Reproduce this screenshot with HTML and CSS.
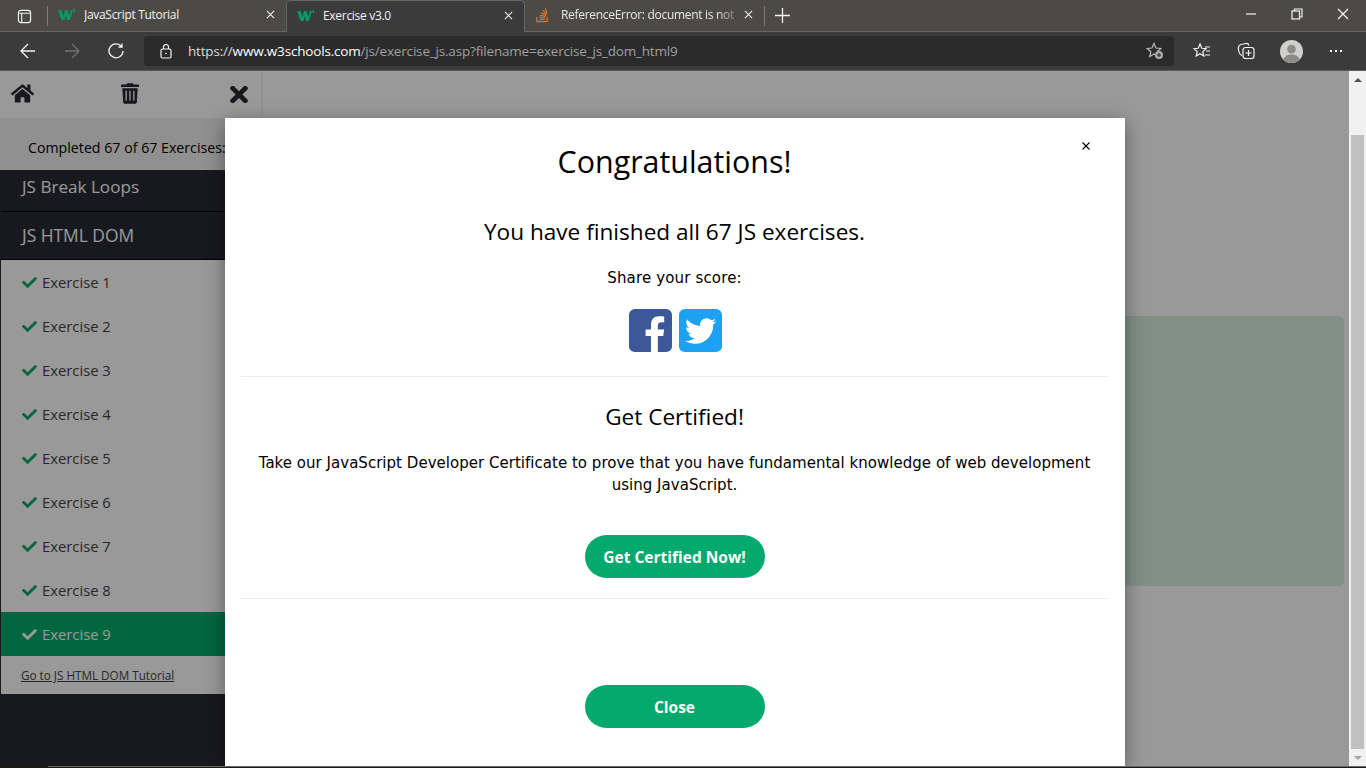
FILE: index.html
```html
<!DOCTYPE html>
<html lang="en">
<head>
<meta charset="utf-8">
<title>Exercise v3.0</title>
<link rel="stylesheet" href="styles.css">
</head>
<body>
<header class="tabbar">
  <svg class="ic tabs-ic" viewBox="0 0 16 16"><rect x="1.500" y="1.500" width="13" height="13" rx="2.500"/><path d="M1.500 4.500h13M5 4.500v10"/></svg>
  <span class="vsep"></span>
  <div class="tab tab-first">
    <svg class="fav" viewBox="0 0 17 12"><path d="M0 1h3.500l2 6 1.500-6h2.500l1.700 6 1.600-6H15l-3.200 10H9L8 6 6.500 11h-3zM15.500 0H17v3h-1.500z"/></svg>
    <span class="tab-title">JavaScript Tutorial</span>
    <svg class="tab-x" viewBox="0 0 10 10"><path d="M1 1l8 8M9 1l-8 8"/></svg>
  </div>
  <div class="tab active">
    <svg class="fav" viewBox="0 0 17 12"><path d="M0 1h3.500l2 6 1.500-6h2.500l1.700 6 1.600-6H15l-3.200 10H9L8 6 6.500 11h-3zM15.500 0H17v3h-1.500z"/></svg>
    <span class="tab-title">Exercise v3.0</span>
    <svg class="tab-x" viewBox="0 0 10 10"><path d="M1 1l8 8M9 1l-8 8"/></svg>
  </div>
  <div class="tab">
    <svg class="fav so" viewBox="0 0 16 16"><path class="so-bin" d="M2 10v5h11v-5"/><path class="so-lines" d="M4.500 12.800h6M4.700 10.600l6 .6M5.300 8.200l5.800 1.600M6.600 5.600l5.200 3M8.600 3l3.600 4.600M11.200 1l1.400 5.600"/></svg>
    <span class="tab-title fade">ReferenceError: document is not</span>
    <svg class="tab-x" viewBox="0 0 10 10"><path d="M1 1l8 8M9 1l-8 8"/></svg>
  </div>
  <span class="vsep"></span>
  <svg class="ic plus" viewBox="0 0 14 14"><path d="M7 0v14M0 7h14"/></svg>
  <div class="winctl">
    <svg class="ic" viewBox="0 0 12 12"><path d="M1 6h10"/></svg>
    <svg class="ic" viewBox="0 0 12 12"><rect x="1" y="3" width="7.500" height="8"/><path d="M3.500 3V1h7.500v8H8.500"/></svg>
    <svg class="ic" viewBox="0 0 12 12"><path d="M1 1l10 10M11 1L1 11"/></svg>
  </div>
</header>
<nav class="toolbar">
  <svg class="ic nav-ic" viewBox="0 0 16 16"><path d="M15 8H1M8 1L1 8l7 7"/></svg>
  <svg class="ic nav-ic dim" viewBox="0 0 16 16"><path d="M1 8h14M8 1l7 7-7 7"/></svg>
  <svg class="ic nav-ic" viewBox="0 0 16 16"><path d="M13.500 3.500A7 7 0 1 0 15 8M14 .5v3.500h-3.500"/></svg>
  <div class="omnibox">
    <svg class="ic lock" viewBox="0 0 12 15"><rect x="1" y="5" width="10" height="9" rx="1.500"/><path d="M3.500 5V3a2.500 2.500 0 0 1 5 0v2"/><circle class="dot" cx="6" cy="9.500" r=".8"/></svg>
    <span class="url"><span class="u-mid">https://</span><span class="u-host">www.w3schools.com</span><span class="u-dim">/js/exercise_js.asp?filename=exercise_js_dom_html9</span></span>
    <svg class="ic star-add" viewBox="0 0 18 18"><path d="M8 1.500l2 4.500 4.800.5-3.600 3.200 1 4.800L8 12l-4.200 2.500 1-4.800L1.200 6.500 6 6z"/><circle class="badge" cx="13" cy="13" r="4"/><path class="badge-plus" d="M13 11v4M11 13h4"/></svg>
  </div>
  <div class="tools">
    <svg class="ic tool" viewBox="0 0 18 18"><path d="M7 2l1.800 4.300 4.200.4-3.200 2.900 1 4.400L7 11.700 3.200 14l1-4.400L1 6.700l4.200-.4zM12 5h5M13 9h4M12 13h5"/></svg>
    <svg class="ic tool" viewBox="0 0 18 18"><path d="M5 13.500C3 13 2 11 1.500 8 1 5 2 3 4 2.500l5-1c1.500-.2 2.500.5 3 2"/><rect x="6" y="5.500" width="11" height="11" rx="2.500"/><path d="M11.500 8v6M8.500 11h6"/></svg>
    <svg class="avatar" viewBox="0 0 24 24"><circle class="av-bg" cx="12" cy="12" r="12"/><circle class="av-fg" cx="12" cy="9.500" r="4.500"/><path class="av-fg" d="M3.500 20.500C5 16 8 15 12 15s7 1 8.500 5.500A12 12 0 0 1 3.500 20.500z"/></svg>
    <span class="more"><i></i><i></i><i></i></span>
  </div>
</nav>
<div class="page">
  <aside class="sidebar">
    <div class="side-top">
      <svg class="s-ic home" viewBox="0 0 576 512"><path d="M280 148L96 300v164c0 9 7 16 16 16l112-.3c9 0 16-7 16-16V368c0-9 7-16 16-16h64c9 0 16 7 16 16v95.600c0 9 7 16 16 16l112 .4c9 0 16-7 16-16V300L296 148c-4.500-3.600-11.500-3.600-16 0zM572 251l-84-69V44c0-7-5-12-12-12h-56c-7 0-12 5-12 12v72l-89-74c-18-14-43-14-61 0L4 251c-5 4-6 12-2 17l26 31c4 5 12 6 17 2L280 107c4.500-3.600 11.500-3.600 16 0l235 194c5 4 13 3 17-2l26-31c4-5 3-13-2-17z"/></svg>
      <svg class="s-ic trash" viewBox="0 0 448 512"><path d="M432 32H312l-9-19C299 5 291 0 282 0H166c-9 0-17 5-21 13l-9 19H16C7 32 0 39 0 48v32c0 9 7 16 16 16h416c9 0 16-7 16-16V48c0-9-7-16-16-16zM53 467c2 25 23 45 48 45h246c25 0 46-20 48-45L416 128H32zM144 200v220c0 9-7 16-16 16s-16-7-16-16V200c0-9 7-16 16-16s16 7 16 16zm96 0v220c0 9-7 16-16 16s-16-7-16-16V200c0-9 7-16 16-16s16 7 16 16zm96 0v220c0 9-7 16-16 16s-16-7-16-16V200c0-9 7-16 16-16s16 7 16 16z"/></svg>
      <svg class="s-ic cross" viewBox="0 90 352 332"><path d="M242 256l100-100c12-12 12-32 0-44l-22-22c-12-12-32-12-44 0L176 190 76 90c-12-12-32-12-44 0L10 112c-12 12-12 32 0 44l100 100L10 356c-12 12-12 32 0 44l22 22c12 12 32 12 44 0l100-100 100 100c12 12 32 12 44 0l22-22c12-12 12-32 0-44z"/></svg>
    </div>
    <div class="progress">Completed 67 of 67 Exercises:</div>
    <div class="topic first">JS Break Loops</div>
    <div class="topic">JS HTML DOM</div>
    <ul class="ex-list">
      <li class="ex"><svg class="check" viewBox="0 0 512 512"><path d="M174 439L7 273c-10-10-10-26 0-36l36-36c10-10 26-10 36 0l113 112L433 73c10-10 26-10 36 0l36 36c10 10 10 26 0 36L210 439c-10 10-26 10-36 0z"/></svg>Exercise 1</li>
      <li class="ex"><svg class="check" viewBox="0 0 512 512"><path d="M174 439L7 273c-10-10-10-26 0-36l36-36c10-10 26-10 36 0l113 112L433 73c10-10 26-10 36 0l36 36c10 10 10 26 0 36L210 439c-10 10-26 10-36 0z"/></svg>Exercise 2</li>
      <li class="ex"><svg class="check" viewBox="0 0 512 512"><path d="M174 439L7 273c-10-10-10-26 0-36l36-36c10-10 26-10 36 0l113 112L433 73c10-10 26-10 36 0l36 36c10 10 10 26 0 36L210 439c-10 10-26 10-36 0z"/></svg>Exercise 3</li>
      <li class="ex"><svg class="check" viewBox="0 0 512 512"><path d="M174 439L7 273c-10-10-10-26 0-36l36-36c10-10 26-10 36 0l113 112L433 73c10-10 26-10 36 0l36 36c10 10 10 26 0 36L210 439c-10 10-26 10-36 0z"/></svg>Exercise 4</li>
      <li class="ex"><svg class="check" viewBox="0 0 512 512"><path d="M174 439L7 273c-10-10-10-26 0-36l36-36c10-10 26-10 36 0l113 112L433 73c10-10 26-10 36 0l36 36c10 10 10 26 0 36L210 439c-10 10-26 10-36 0z"/></svg>Exercise 5</li>
      <li class="ex"><svg class="check" viewBox="0 0 512 512"><path d="M174 439L7 273c-10-10-10-26 0-36l36-36c10-10 26-10 36 0l113 112L433 73c10-10 26-10 36 0l36 36c10 10 10 26 0 36L210 439c-10 10-26 10-36 0z"/></svg>Exercise 6</li>
      <li class="ex"><svg class="check" viewBox="0 0 512 512"><path d="M174 439L7 273c-10-10-10-26 0-36l36-36c10-10 26-10 36 0l113 112L433 73c10-10 26-10 36 0l36 36c10 10 10 26 0 36L210 439c-10 10-26 10-36 0z"/></svg>Exercise 7</li>
      <li class="ex"><svg class="check" viewBox="0 0 512 512"><path d="M174 439L7 273c-10-10-10-26 0-36l36-36c10-10 26-10 36 0l113 112L433 73c10-10 26-10 36 0l36 36c10 10 10 26 0 36L210 439c-10 10-26 10-36 0z"/></svg>Exercise 8</li>
      <li class="ex current"><svg class="check" viewBox="0 0 512 512"><path d="M174 439L7 273c-10-10-10-26 0-36l36-36c10-10 26-10 36 0l113 112L433 73c10-10 26-10 36 0l36 36c10 10 10 26 0 36L210 439c-10 10-26 10-36 0z"/></svg>Exercise 9</li>
      <li class="tut"><a href="#">Go to JS HTML DOM Tutorial</a></li>
    </ul>
  </aside>
  <main class="content"><div class="result-panel"></div></main>
  <div class="scrollbar">
    <span class="sb-btn"><i class="arrow up"></i></span>
    <span class="sb-thumb"></span>
    <span class="sb-btn"><i class="arrow down"></i></span>
  </div>
  <div class="overlay">
    <section class="modal">
      <button class="close-x" type="button"><svg viewBox="0 0 8 8"><path d="M.5.500l7 7M7.500.500l-7 7"/></svg></button>
      <div class="m-block">
        <h2 class="m-title">Congratulations!</h2>
        <p class="m-lead">You have finished all 67 JS exercises.</p>
        <p class="m-share">Share your score:</p>
        <div class="social">
          <svg class="soc" viewBox="0 0 44 44"><rect class="fb" width="44" height="44" rx="6"/><path class="glyph" d="M29.500 44V27.500h5.500l1-6.500h-6.500v-4c0-2 1-3.500 3.500-3.500H36V7.800C35 7.600 33 7.500 31 7.500c-5.500 0-8.500 3.200-8.500 8.800V21H17v6.500h5.500V44z"/></svg>
          <svg class="soc" viewBox="0 0 44 44"><rect class="tw" width="44" height="44" rx="6"/><path class="glyph" d="M38 12.500c-1.200.5-2.400.9-3.700 1 1.300-.8 2.400-2.100 2.900-3.600-1.300.7-2.700 1.300-4.200 1.600-1.200-1.300-2.900-2.100-4.800-2.100-3.600 0-6.600 3-6.600 6.600 0 .5.100 1 .2 1.500-5.500-.3-10.300-2.900-13.500-6.900-.6 1-.9 2.100-.9 3.300 0 2.300 1.200 4.300 2.900 5.500-1.100 0-2.100-.3-3-.8v.1c0 3.200 2.300 5.900 5.300 6.500-.6.100-1.100.2-1.700.2-.4 0-.8 0-1.200-.1.900 2.600 3.300 4.500 6.200 4.600-2.300 1.800-5.100 2.800-8.200 2.800-.5 0-1 0-1.600-.1 2.900 1.900 6.400 3 10.100 3 12.100 0 18.800-10 18.800-18.800v-.9c1.300-.9 2.400-2.100 3.300-3.400z"/></svg>
        </div>
      </div>
      <div class="m-block">
        <h3 class="m-sub">Get Certified!</h3>
        <p class="m-text">Take our JavaScript Developer Certificate to prove that you have fundamental knowledge of web development using JavaScript.</p>
        <a class="pill cert" href="#">Get Certified Now!</a>
      </div>
      <div class="m-foot"><button class="pill" type="button">Close</button></div>
    </section>
  </div>
</div>
<div class="bottom-strip"><span></span></div>
</body>
</html>
```
FILE: styles.css
```css
* { box-sizing: border-box; }
html, body { margin: 0; height: 100%; overflow: hidden; }
body { display: flex; flex-direction: column; width: 1366px; height: 768px; font-family: "Open Sans", sans-serif; background: #fff; }

.ic { fill: none; stroke: #f4f4f4; stroke-width: 1.2; flex: none; }

.tabbar { height: 32px; flex: none; display: flex; align-items: stretch; background: #4b4a47; border-bottom: 1px solid #666; position: relative; color: #fff; }
.tabs-ic { width: 15px; height: 15px; margin: 9px 15px 0 17px; }
.vsep { width: 1px; height: 20px; margin-top: 6px; background: #7d7c79; flex: none; }
.tab { width: 239px; display: flex; align-items: center; padding: 0 11px 2px 10px; flex: none; font-size: 12px; letter-spacing: -.3px; }
.tab-first { width: 238px; }
.tab.active { background: #3b3b3b; border: 1px solid #666; border-bottom: 0; border-radius: 5px 5px 0 0; height: 32px; margin-bottom: -1px; }
.fav { width: 17px; height: 12px; fill: #049a67; flex: none; margin-right: 9px; }
.fav.so { fill: none; stroke: #e8751f; stroke-width: 1.3; width: 15px; height: 16px; margin-right: 11px; }
.tab-title { flex: 1; white-space: nowrap; overflow: hidden; color: #f2f2f2; }
.fade { color: #e8e8e8; -webkit-mask-image: linear-gradient(90deg, #000 85%, transparent 100%); mask-image: linear-gradient(90deg, #000 85%, transparent 100%); }
.tab-x { width: 9px; height: 9px; fill: none; stroke: #f0f0f0; stroke-width: 1.2; flex: none; }
.plus { width: 15px; height: 15px; margin: 8px 0 0 10px; }
.winctl { margin-left: auto; display: flex; gap: 34px; padding: 8px 17px 0 0; }
.winctl svg { width: 12px; height: 12px; }

.toolbar { height: 39px; flex: none; display: flex; align-items: center; background: #3b3b3b; border-bottom: 1px solid #5c5c5c; }
.nav-ic { width: 16px; height: 16px; margin-left: 20px; stroke-width: 1.3; }
.nav-ic + .nav-ic { margin-left: 28px; }
.nav-ic.dim { stroke: #737373; }
.omnibox { width: 1030px; height: 30px; margin-left: 20px; border-radius: 4px; background: #2b2b2b; display: flex; align-items: center; padding: 0 10px 0 16px; font-size: 13.500px; }
.lock { width: 12px; height: 15px; margin-right: 16px; }
.dot { fill: #f4f4f4; stroke: none; }
.url { flex: 1; white-space: nowrap; letter-spacing: -.18px; }
.u-host { color: #fff; }
.u-mid { color: #dadada; }
.u-dim { color: #a0a0a0; }
.star-add { width: 18px; height: 18px; stroke: #bbb; }
.badge { fill: #aaa; stroke: none; }
.badge-plus { stroke: #2b2b2b; }
.tools { display: flex; align-items: center; flex: 1; padding-left: 19px; }
.tool { width: 18px; height: 18px; margin-right: 26px; }
.tool + .tool { margin-right: 25px; }
.avatar { width: 23px; height: 23px; }
.av-bg { fill: #d2d0cd; }
.av-fg { fill: #8d8b88; }
.more { display: flex; gap: 3px; margin-left: 27px; }
.more i { width: 2px; height: 2px; background: #f4f4f4; }

.page { flex: 1; position: relative; display: flex; min-height: 0; background: #fff; }
.sidebar { width: 261px; flex: none; background: #282a35; display: flex; flex-direction: column; box-shadow: 1px 0 2px rgba(0,0,0,.08); }
.side-top { height: 47px; background: #fff; flex: none; display: flex; align-items: flex-start; justify-content: space-between; padding: 12px 13px 0 11px; }
.s-ic { fill: #282a35; height: 21px; }
.home { width: 23px; }
.trash { width: 18px; margin-right: 4px; }
.cross { width: 18px; height: 17px; margin-top: 3px; }
.progress { height: 52px; flex: none; background: #f1f1f1; color: #000; font-size: 14.200px; padding: 20px 0 0 28px; white-space: nowrap; overflow: hidden; }
.topic { height: 48px; flex: none; color: #fff; font-size: 17.400px; padding: 11px 0 0 21px; border-bottom: 1px solid #000; margin-left: 1px; }
.topic.first { height: 42px; padding-top: 5px; font-size: 17.100px; }
.ex-list { list-style: none; margin: 0 0 0 1px; padding: 0; background: #fff; }
.ex { height: 44px; display: flex; align-items: center; padding-left: 21px; color: #444; font-size: 14.800px; }
.check { width: 15px; height: 15px; fill: #04aa6d; margin-right: 5px; flex: none; }
.current { background: #04aa6d; color: #fff; }
.current .check { fill: #fff; }
.tut { height: 38px; display: flex; align-items: center; padding-left: 20px; font-size: 11.700px; }
.tut a { color: #444; }

.content { flex: 1; min-width: 0; padding: 245px 5px 0 0; }
.result-panel { height: 270px; background: #d9eee1; border-radius: 5px; }

.scrollbar { width: 17px; flex: none; background: #f1f1f1; display: flex; flex-direction: column; align-items: center; }
.sb-btn { height: 17px; width: 100%; flex: none; display: flex; align-items: center; justify-content: center; }
.sb-thumb { flex: 1; width: 13px; margin: 47px 0 0; background: #c1c1c1; }
.arrow { width: 0; height: 0; border-left: 4px solid transparent; border-right: 4px solid transparent; }
.arrow.up { border-bottom: 4px solid #505050; }
.arrow.down { border-top: 4px solid #a3a3a3; }

.overlay { position: absolute; inset: 0 17px 0 0; background: rgba(0,0,0,.4); display: flex; justify-content: center; align-items: flex-start; padding: 47px 0 0 17px; }
.modal { position: relative; width: 900px; height: 648px; margin-left: -17px; background: #fff; box-shadow: 0 4px 18px rgba(0,0,0,.4); padding: 0 16px; color: #000; display: flex; flex-direction: column; text-align: center; }
.close-x { position: absolute; top: 24px; right: 34px; width: 9px; height: 9px; padding: 0; border: 0; background: none; display: flex; }
.close-x svg { width: 8px; height: 8px; fill: none; stroke: #000; stroke-width: 1.1; }
.m-block { border-bottom: 1px solid #eee; flex: none; }
.m-block:first-of-type { height: 259px; padding-top: 22px; }
.m-block + .m-block { height: 222px; padding-top: 24px; }
.m-title { margin: 0; font-size: 30.400px; font-weight: 400; line-height: 44px; }
.m-lead { margin: 32px 0 0; font-size: 22.600px; font-weight: 400; line-height: 32px; }
.m-share { margin: 19px 0 0; font-family: "DejaVu Sans", sans-serif; font-size: 15px; line-height: 22px; letter-spacing: .15px; }
.social { display: flex; justify-content: center; gap: 7px; margin-top: 20px; padding-left: 2px; }
.soc { width: 43px; height: 43px; }
.fb { fill: #3b5998; }
.tw { fill: #1da1f2; }
.glyph { fill: #fff; }
.m-sub { margin: 0; font-size: 22.600px; font-weight: 400; line-height: 32px; }
.m-text { margin: 19px 0 0; font-family: "DejaVu Sans", sans-serif; font-size: 15px; line-height: 22px; padding: 0 10px; letter-spacing: .025px; }
.pill { display: block; width: 180px; height: 43px; margin: 0 auto; border: 0; border-radius: 22px; background: #04aa6d; color: #fff; font: 700 15.500px/44px "Open Sans", sans-serif; text-decoration: none; text-align: center; padding: 0; }
.cert { margin-top: 39px; }
.m-foot { padding-top: 86px; }

.bottom-strip { height: 2px; flex: none; background: #1a1a1a; position: relative; }
.bottom-strip span { display: block; height: 1px; margin-left: 48px; background: #666; }
```
